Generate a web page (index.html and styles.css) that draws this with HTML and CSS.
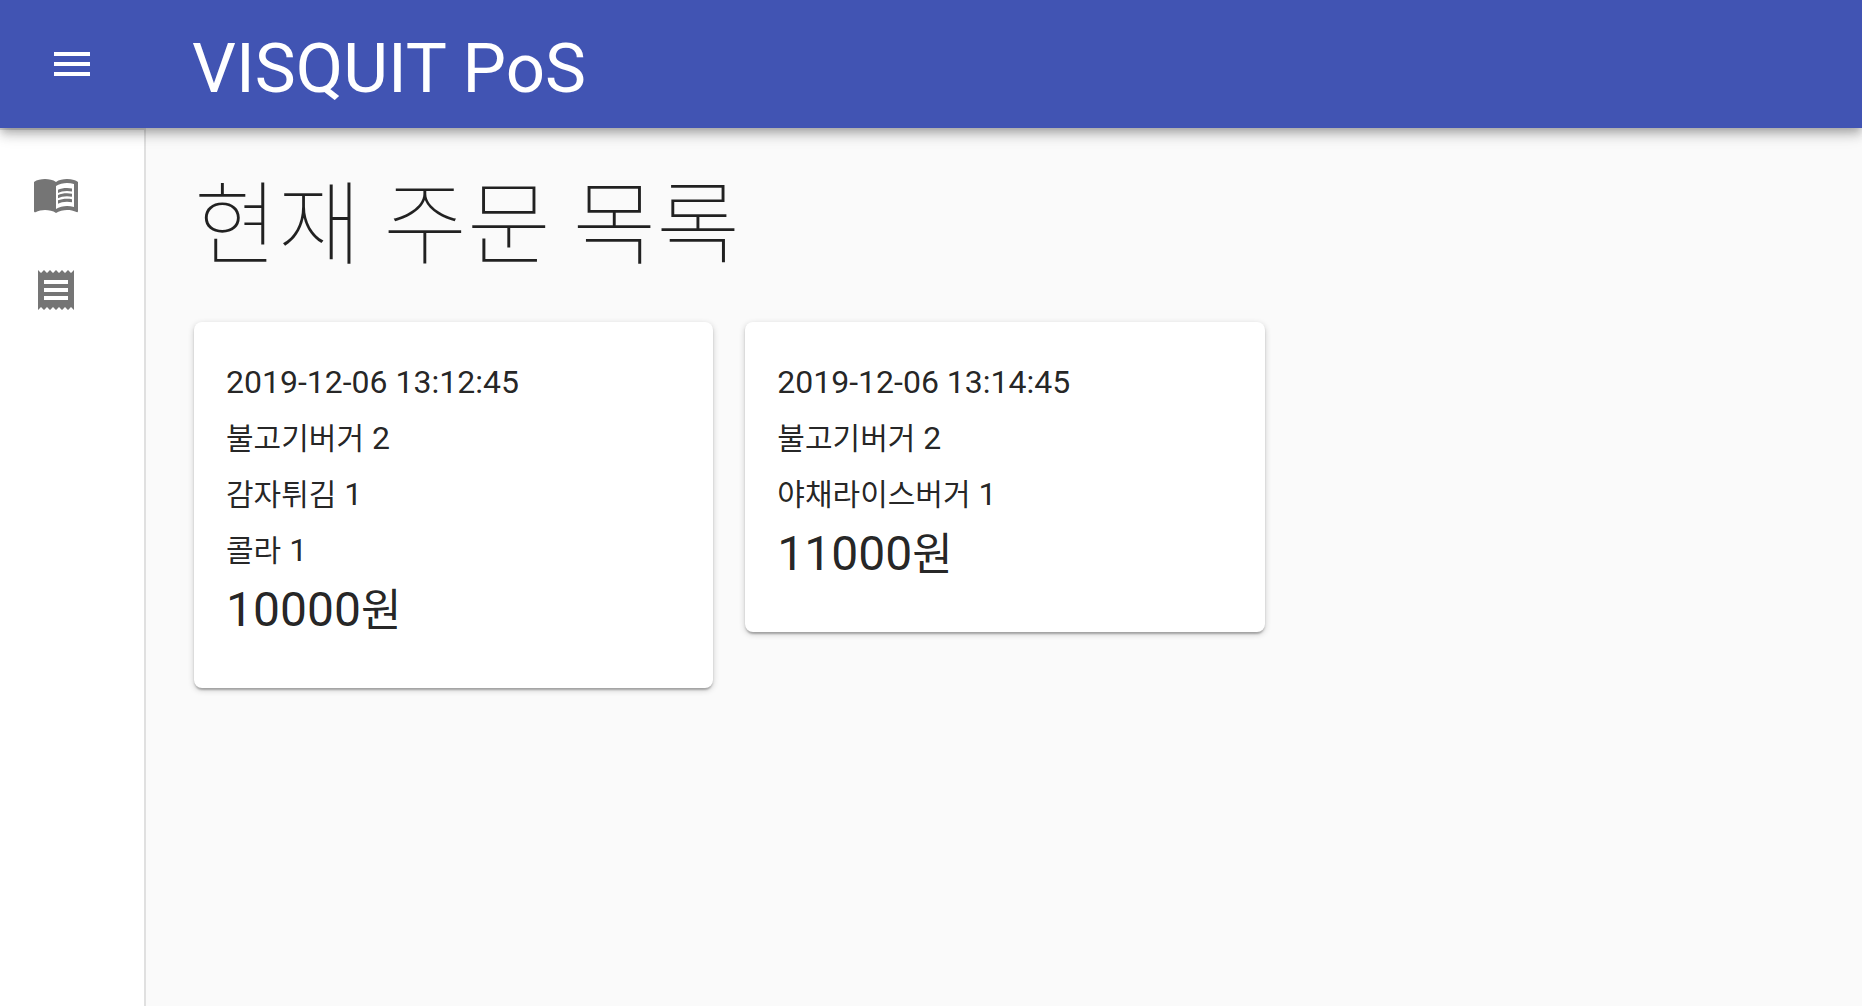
FILE: index.html
```html
<!DOCTYPE html>
<html lang="ko">
<head>
<meta charset="utf-8">
<meta name="viewport" content="width=device-width, initial-scale=1">
<title>VISQUIT PoS</title>
<link rel="stylesheet" href="styles.css">
</head>
<body>
<header class="app-bar">
  <button class="menu-button" type="button" aria-label="메뉴 열기">
    <svg class="icon" viewBox="0 0 24 24" aria-hidden="true"><path d="M3 18h18v-2H3v2zm0-5h18v-2H3v2zm0-7v2h18V6H3z"/></svg>
  </button>
  <span class="app-title">VISQUIT PoS</span>
</header>
<div class="layout">
  <nav class="drawer" aria-label="주 메뉴">
    <a class="drawer-item" href="#menu" aria-label="메뉴판">
      <svg class="icon" viewBox="0 0 24 24" aria-hidden="true"><path d="M21 5c-1.11-.35-2.33-.5-3.5-.5-1.95 0-4.05.4-5.5 1.5-1.45-1.1-3.55-1.5-5.5-1.5S2.45 4.9 1 6v14.65c0 .25.25.5.5.5.1 0 .15-.05.25-.05C3.1 20.45 5.05 20 6.5 20c1.95 0 4.05.4 5.5 1.5 1.35-.85 3.8-1.5 5.5-1.5 1.65 0 3.35.3 4.75 1.05.1.05.15.05.25.05.25 0 .5-.25.5-.5V6c-.6-.45-1.25-.75-2-1zm0 13.5c-1.1-.35-2.3-.5-3.5-.5-1.7 0-4.15.65-5.5 1.5V8c1.35-.85 3.8-1.5 5.5-1.5 1.2 0 2.4.15 3.5.5v11.5z"/><path d="M17.5 10.5c.88 0 1.73.09 2.5.26V9.24c-.79-.15-1.64-.24-2.5-.24-1.7 0-3.24.29-4.5.83v1.66c1.13-.64 2.7-.99 4.5-.99zM13 12.49v1.66c1.13-.64 2.7-.99 4.5-.99.88 0 1.73.09 2.5.26V11.9c-.79-.15-1.64-.24-2.5-.24-1.7 0-3.24.3-4.5.83zM17.5 14.33c-1.7 0-3.24.29-4.5.83v1.66c1.13-.64 2.7-.99 4.5-.99.88 0 1.73.09 2.5.26v-1.52c-.79-.16-1.64-.24-2.5-.24z"/></svg>
    </a>
    <a class="drawer-item" href="#orders" aria-label="주문 목록">
      <svg class="icon" viewBox="0 0 24 24" aria-hidden="true"><path d="M18 17H6v-2h12v2zm0-4H6v-2h12v2zm0-4H6V7h12v2zM3 22l1.5-1.5L6 22l1.5-1.5L9 22l1.5-1.5L12 22l1.5-1.5L15 22l1.5-1.5L18 22l1.5-1.5L21 22V2l-1.5 1.5L18 2l-1.5 1.5L15 2l-1.5 1.5L12 2l-1.5 1.5L9 2 7.5 3.5 6 2 4.5 3.5 3 2v20z"/></svg>
    </a>
  </nav>
  <main class="content">
    <h1 class="page-title">현재 주문 목록</h1>
    <div class="orders">
      <article class="card">
        <time class="line" datetime="2019-12-06T13:12:45">2019-12-06 13:12:45</time>
        <ul class="items">
          <li class="line"><span class="name">불고기버거</span> 2</li>
          <li class="line"><span class="name">감자튀김</span> 1</li>
          <li class="line"><span class="name">콜라</span> 1</li>
        </ul>
        <p class="total">10000<span class="unit">원</span></p>
      </article>
      <article class="card">
        <time class="line" datetime="2019-12-06T13:14:45">2019-12-06 13:14:45</time>
        <ul class="items">
          <li class="line"><span class="name">불고기버거</span> 2</li>
          <li class="line"><span class="name">야채라이스버거</span> 1</li>
        </ul>
        <p class="total">11000<span class="unit">원</span></p>
      </article>
    </div>
  </main>
</div>
</body>
</html>
```
FILE: styles.css
```css
* {
  box-sizing: border-box;
}

body {
  margin: 0;
  min-height: 100vh;
  display: flex;
  flex-direction: column;
  background: #fafafa;
  color: rgba(0, 0, 0, 0.87);
  font-family: Roboto, "Noto Sans CJK KR", sans-serif;
  font-size: 32px;
}

.icon {
  display: block;
  width: 48px;
  height: 48px;
  fill: currentColor;
}

.app-bar {
  position: relative;
  z-index: 1;
  display: flex;
  align-items: center;
  gap: 72px;
  height: 128px;
  padding: 0 48px 0 24px;
  background: #4154b3;
  color: #fff;
  box-shadow: 0 4px 8px -2px rgba(0, 0, 0, 0.2), 0 8px 10px rgba(0, 0, 0, 0.14), 0 2px 20px rgba(0, 0, 0, 0.12);
}

.menu-button {
  padding: 24px;
  border: 0;
  background: none;
  color: inherit;
}

.app-title {
  font-size: 69px;
  line-height: 84px;
  padding-top: 10px;
}

.layout {
  flex: 1;
  display: flex;
}

.drawer {
  flex: none;
  width: 146px;
  padding-top: 16px;
  background: #fff;
  border-top: 2px solid #e0e0e0;
  border-right: 2px solid #e0e0e0;
}

.drawer-item {
  display: block;
  padding: 24px 32px;
  color: #757575;
}

.content {
  flex: 1;
  padding: 32px 46px 48px 48px;
}

.page-title {
  margin: 0 0 30px;
  font-size: 91px;
  font-weight: 100;
  line-height: 132px;
}

.orders {
  display: grid;
  grid-template-columns: repeat(3, 1fr);
  gap: 32px;
  align-items: start;
}

.card {
  padding: 32px 32px 48px;
  background: #fff;
  border-radius: 8px;
  box-shadow: 0 2px 6px rgba(0, 0, 0, 0.2), 0 2px 2px rgba(0, 0, 0, 0.14), 0 4px 2px -2px rgba(0, 0, 0, 0.12);
}

.line {
  display: block;
  height: 56px;
  line-height: 56px;
}

.items {
  margin: 0;
  padding: 0;
  list-style: none;
}

.name {
  font-size: 30px;
}

.total {
  margin: 0;
  height: 62px;
  font-size: 48px;
  line-height: 64px;
}

.unit {
  font-size: 44px;
}
```
